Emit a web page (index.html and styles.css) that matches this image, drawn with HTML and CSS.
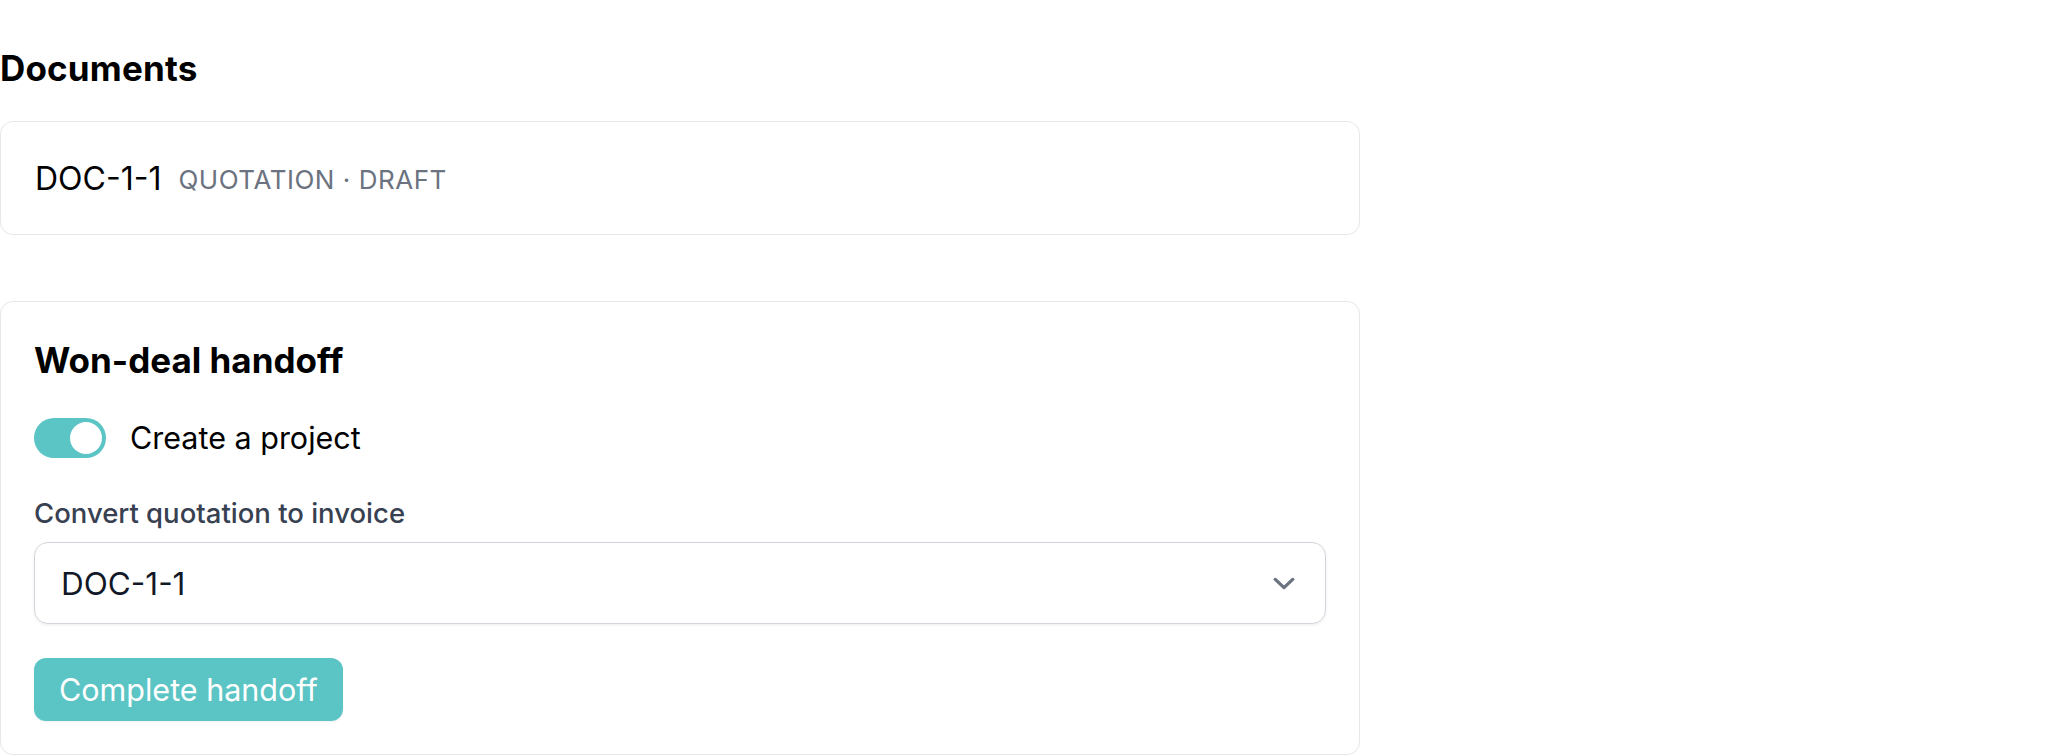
FILE: index.html
```html
<!DOCTYPE html>
<html>
<head>
<title>Deal documents</title>
<link rel="stylesheet" href="styles.css">
</head>
<body>
<main class="panel">
  <h2 class="section-title">Documents</h2>
  <ul class="doc-list">
    <li class="doc-card"><span class="doc-id">DOC-1-1</span><span class="doc-meta">Quotation · Draft</span></li>
  </ul>

  <section class="handoff">
    <h3 class="handoff-title">Won-deal handoff</h3>
    <label class="toggle-row">
      <span class="switch is-on"><span class="knob"></span></span>
      Create a project
    </label>
    <label class="field-label" for="invoice-doc">Convert quotation to invoice</label>
    <div class="select" id="invoice-doc">
      <span>DOC-1-1</span>
      <svg class="chevron" viewBox="0 0 24 14" width="22" height="13" fill="none" stroke="#6b7280" stroke-width="3.6" stroke-linecap="round" stroke-linejoin="round"><path d="M2.5 2.5l9.5 9 9.5-9"/></svg>
    </div>
    <button class="btn-primary" type="button">Complete handoff</button>
  </section>
</main>
</body>
</html>
```

FILE: styles.css
```css
body { margin: 0; font-family: Inter, "Noto Sans", sans-serif; color: #000; background: #fff; }
.panel { width: 1360px; padding-top: 48px; }
.section-title { margin: 0; font-size: 35px; font-weight: 700; line-height: 40px; letter-spacing: 0.005em; }
.doc-list { list-style: none; margin: 33px 0 0; padding: 0; }
.doc-card { display: flex; align-items: center; gap: 17px; height: 114px; box-sizing: border-box; padding: 2px 34px 0; border: 1.5px solid #e5e7eb; border-radius: 13px; line-height: 44px; }
.doc-id { font-size: 32px; }
.doc-meta { font-size: 26px; color: #6b7280; text-transform: uppercase; letter-spacing: 0.02em; padding-top: 2px; }

.handoff { margin-top: 66px; padding: 34px 33px 32.5px; border: 1.5px solid #e5e7eb; border-radius: 13px; display: flex; flex-direction: column; align-items: flex-start; }
.handoff-title { margin: 0; font-size: 35px; font-weight: 700; line-height: 49px; }
.toggle-row { display: flex; align-items: center; gap: 24px; margin-top: 33px; font-size: 30.5px; line-height: 40px; }
.switch { width: 72px; height: 40px; border-radius: 20px; background: #5bc4c4; display: flex; align-items: center; justify-content: flex-end; padding: 0 4px; box-sizing: border-box; }
.knob { width: 32px; height: 32px; border-radius: 50%; background: #fff; }
.field-label { margin-top: 37px; font-size: 27.5px; font-weight: 500; color: #374151; line-height: 36px; }
.select { align-self: stretch; margin-top: 11px; height: 82px; box-sizing: border-box; display: flex; align-items: center; justify-content: space-between; padding: 0 30px 0 26px; border: 1.5px solid #d1d5db; border-radius: 14px; box-shadow: 0 1px 3px rgba(0,0,0,0.08); font-size: 31.5px; color: #111827; }
.btn-primary { margin-top: 34px; height: 63px; padding: 0 25px; border: 0; border-radius: 12px; background: #5bc4c4; color: #fff; font-family: inherit; font-size: 30.5px; box-shadow: 0 1px 2px rgba(0,0,0,0.06); }
```
